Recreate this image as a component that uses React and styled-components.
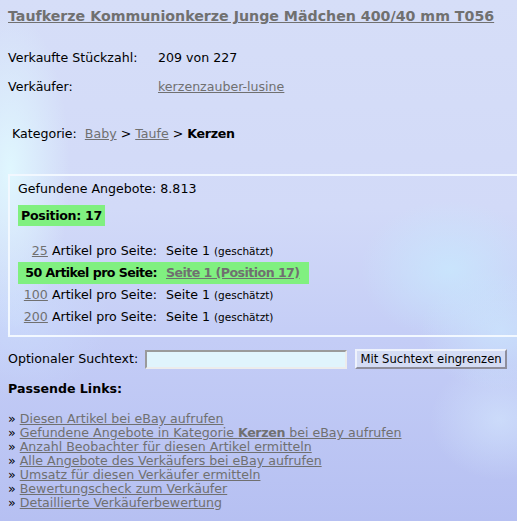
import React from 'react';
import styled, { createGlobalStyle } from 'styled-components';

const Global = createGlobalStyle`
  html, body {
    margin: 0;
    padding: 0;
    height: 100%;
    overflow: hidden;
  }
  body {
    font: 400 12.6px/16px 'DejaVu Sans', Verdana, sans-serif;
    color: #000;
    white-space: nowrap;
    background:
      radial-gradient(ellipse 60px 160px at 10px 170px, rgba(225, 250, 255, 0.9), rgba(225, 250, 255, 0) 100%),
      radial-gradient(ellipse 90px 70px at 450px 270px, rgba(200, 235, 255, 0.7), rgba(200, 235, 255, 0) 100%),
      radial-gradient(ellipse 80px 60px at 500px 330px, rgba(205, 235, 255, 0.6), rgba(205, 235, 255, 0) 100%),
      radial-gradient(ellipse 70px 60px at 500px 420px, rgba(215, 235, 255, 0.55), rgba(215, 235, 255, 0) 100%),
      radial-gradient(ellipse 90px 80px at 20px 320px, rgba(205, 225, 255, 0.5), rgba(205, 225, 255, 0) 100%),
      linear-gradient(180deg, #d6def8 0%, #d2daf8 40%, #c4cdf6 65%, #b6c0f2 100%);
  }
`;

const Page = styled.div`
  padding: 7px 8px 0 8px;
  a {
    color: #707070;
    text-decoration: underline;
  }
`;

const Title = styled.a`
  display: inline-block;
  font: 700 14.2px/18px 'DejaVu Sans', Verdana, sans-serif;
  margin-bottom: 25px;
`;

const InfoRow = styled.div`
  display: grid;
  grid-template-columns: 150px auto;
  height: 29px;
`;

const Category = styled.div`
  padding: 18px 0 0 4px;
  height: 48px;
  b { font-weight: 700; letter-spacing: -0.3px; }
`;

const Box = styled.div`
  border: 2px solid #f2f8ff;
  margin-right: -30px;
  padding: 5px 8px 7px 8px;
`;

const Found = styled.div`
  height: 18px;
  margin-bottom: 6px;
`;

const Highlight = styled.div`
  display: inline-block;
  background: #80f080;
  font-weight: 700;
  letter-spacing: -0.3px;
  padding: 3px 3px 2px 3px;
`;

const Rows = styled.div`
  margin-top: 14px;
  display: grid;
  grid-template-columns: max-content;
`;

const Row = styled.div`
  display: grid;
  grid-template-columns: 139px max-content;
  column-gap: 9px;
  align-items: center;
  height: 22px;
  padding-right: ${({ $on }) => ($on ? '9px' : '4px')};
  font-weight: ${({ $on }) => ($on ? 700 : 400)};
  letter-spacing: ${({ $on }) => ($on ? '-0.55px' : 'normal')};
  background: ${({ $on }) => ($on ? '#80f080' : 'transparent')};
  span.l { text-align: right; }
  small { font-size: 10.5px; }
`;

const SearchRow = styled.form`
  display: flex;
  align-items: center;
  margin-top: 12px;
`;

const SearchLabel = styled.span`
  margin-right: 7px;
`;

const Input = styled.input`
  box-sizing: border-box;
  width: 202px;
  height: 19px;
  background: #e0f4fc;
  border: 2px solid;
  border-color: #9a9a9a #ececec #ececec #9a9a9a;
  margin: 0 8px 0 0;
  padding: 0;
`;

const Button = styled.button`
  box-sizing: border-box;
  height: 20px;
  width: 152px;
  padding: 0;
  font: 400 11.6px 'DejaVu Sans', Verdana, sans-serif;
  color: #000;
  background: #d4dcf4;
  border: 2px solid;
  border-color: #eef2fc #8e8e9c #8e8e9c #eef2fc;
`;

const LinksHead = styled.div`
  font-weight: 700;
  margin-top: 12px;
  height: 31px;
`;

const LinkList = styled.ul`
  list-style: none;
  margin: 0;
  padding: 0;
  li {
    line-height: 14px;
    &::before {
      content: '» ';
    }
  }
  b { letter-spacing: -0.3px; }
`;

const rows = [
  { n: '25', value: 'Seite 1', note: '(geschätzt)' },
  { n: '50', value: 'Seite 1 (Position 17)', on: true },
  { n: '100', value: 'Seite 1', note: '(geschätzt)' },
  { n: '200', value: 'Seite 1', note: '(geschätzt)' },
];

const links = [
  'Diesen Artikel bei eBay aufrufen',
  <>Gefundene Angebote in Kategorie <b>Kerzen</b> bei eBay aufrufen</>,
  'Anzahl Beobachter für diesen Artikel ermitteln',
  'Alle Angebote des Verkäufers bei eBay aufrufen',
  'Umsatz für diesen Verkäufer ermitteln',
  'Bewertungscheck zum Verkäufer',
  'Detaillierte Verkäuferbewertung',
];

const App = () => {
  return (
    <>
      <Global />
      <Page>
        <Title href="#">Taufkerze Kommunionkerze Junge Mädchen 400/40 mm T056</Title>
        <InfoRow>
          <span>Verkaufte Stückzahl:</span>
          <span>209 von 227</span>
        </InfoRow>
        <InfoRow>
          <span>Verkäufer:</span>
          <a href="#">kerzenzauber-lusine</a>
        </InfoRow>
        <Category>
          Kategorie:&nbsp; <a href="#">Baby</a> &gt; <a href="#">Taufe</a> &gt; <b>Kerzen</b>
        </Category>
        <Box>
          <Found>Gefundene Angebote: 8.813</Found>
          <Highlight>Position: 17</Highlight>
          <Rows>
            {rows.map((r) => (
              <Row key={r.n} $on={r.on}>
                <span className="l">
                  {r.on ? r.n : <a href="#">{r.n}</a>} Artikel pro Seite:
                </span>
                <span className="v">
                  {r.on ? <a href="#">{r.value}</a> : <>{r.value} <small>{r.note}</small></>}
                </span>
              </Row>
            ))}
          </Rows>
        </Box>
        <SearchRow onSubmit={(e) => e.preventDefault()}>
          <SearchLabel>Optionaler Suchtext:</SearchLabel>
          <Input type="text" />
          <Button type="submit">Mit Suchtext eingrenzen</Button>
        </SearchRow>
        <LinksHead>Passende Links:</LinksHead>
        <LinkList>
          {links.map((l, i) => (
            <li key={i}><a href="#">{l}</a></li>
          ))}
        </LinkList>
      </Page>
    </>
  );
};

export default App;
